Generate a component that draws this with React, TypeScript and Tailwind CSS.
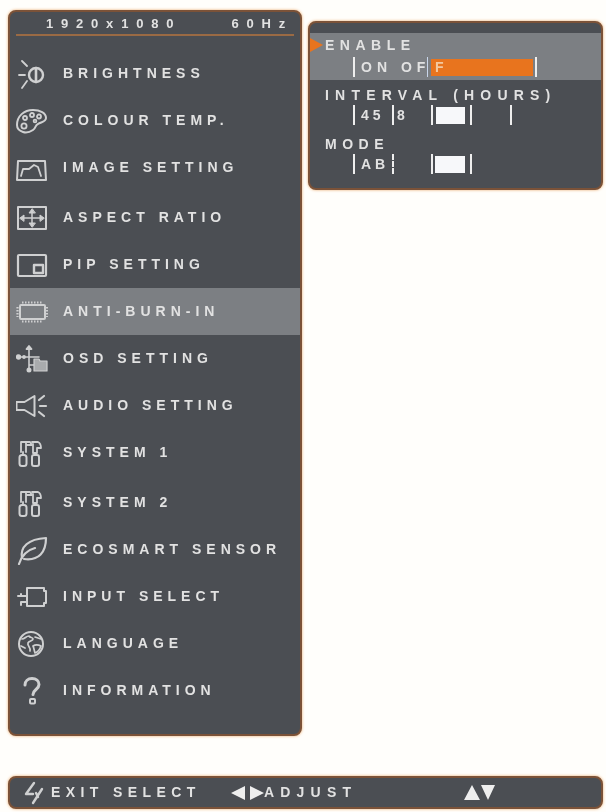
import type { ReactNode } from "react";

function Icon({ children, className = "" }: { children: ReactNode; className?: string }) {
    return (
        <svg
            viewBox="0 0 32 30"
            className={`w-[32px] h-[30px] shrink-0 ${className}`}
            fill="none"
            stroke="#cfd0d1"
            strokeWidth="1.8"
            strokeLinecap="round"
            strokeLinejoin="round"
        >
            {children}
        </svg>
    );
}

const icons = {
    brightness: (
        <Icon>
            <circle cx="20" cy="16" r="7" strokeWidth="2.4" />
            <path d="M20 9v14" strokeWidth="2.6" />
            <path d="M6 2l5 5M3 16h6M6 29l5-7" />
        </Icon>
    ),
    colour: (
        <Icon>
            <path d="M1 19C1 10 8 4 17 4c7 0 13 3 13 8 0 4-5 4-8 6-3 1-2 4-5 6-3 2-7 3-10 2-3-1-6-3-6-7z" strokeWidth="2" />
            <circle cx="8" cy="20" r="2.600" />
            <circle cx="9" cy="12" r="2" />
            <circle cx="16" cy="9" r="2" />
            <circle cx="23" cy="10.500" r="2" />
            <circle cx="19" cy="15" r="1.400" />
        </Icon>
    ),
    image: (
        <Icon>
            <path d="M2 8h27l1 19H1z" strokeWidth="2" />
            <path d="M5 23l2-7h6l5-4 4 2 3 9" />
        </Icon>
    ),
    aspect: (
        <Icon>
            <rect x="2" y="4" width="28" height="22" strokeWidth="2" />
            <path d="M5 15h22M16 7v16" strokeWidth="1.500" />
            <path d="M4 15l4-3v6zM28 15l-4-3v6zM16 6l-3 4h6zM16 24l-3-4h6z" fill="#cfd0d1" strokeWidth="1" />
        </Icon>
    ),
    pip: (
        <Icon>
            <rect x="2" y="5" width="28" height="21" rx="1" strokeWidth="2.200" />
            <rect x="18" y="15" width="9" height="8" strokeWidth="2.400" />
        </Icon>
    ),
    burn: (
        <Icon>
            <rect x="4" y="8" width="25" height="14" rx="1" strokeWidth="2" />
            <path d="M6 5.500h21M6 24.500h21" strokeDasharray="1.500 1.500" strokeLinecap="butt" strokeWidth="2.200" />
            <path d="M1.500 10v10M31 10v10" strokeDasharray="1.500 1.500" strokeLinecap="butt" strokeWidth="2.200" />
        </Icon>
    ),
    osd: (
        <Icon>
            <path d="M2 13h21M13 4v22M13 21h5" strokeWidth="1.600" />
            <path d="M13 2l-2.500 3h5z" fill="#cfd0d1" />
            <circle cx="2.500" cy="13" r="1.800" fill="#cfd0d1" />
            <circle cx="8" cy="13" r="1" fill="#cfd0d1" />
            <path d="M18 15h5l1 2h7v10H18z" fill="#a9abad" strokeWidth="1.200" />
            <circle cx="13" cy="26" r="1.600" fill="#cfd0d1" />
        </Icon>
    ),
    audio: (
        <Icon>
            <path d="M0.500 11h8l10-6v20l-10-6h-8z" strokeWidth="2" />
            <path d="M23 9l5-4M24 15h6M23 21l5 4" strokeWidth="2.200" />
        </Icon>
    ),
    system: (
        <Icon>
            <path d="M5 4h5v10M5 4v10M10 4h4l2 3h-6" strokeWidth="1.800" />
            <rect x="3.500" y="17" width="7" height="11" rx="2.500" strokeWidth="2" />
            <path d="M7 14v3" />
            <path d="M16 4h6c2 1 3 3 3 6h-4v5h-4V6" strokeWidth="1.800" />
            <rect x="16" y="17" width="7" height="11" rx="2" strokeWidth="2" />
        </Icon>
    ),
    eco: (
        <Icon>
            <path d="M6 23C4 12 12 4 30 3c0 14-7 23-22 21" strokeWidth="2.200" />
            <path d="M3 29c3-9 8-14 16-16" strokeWidth="2.200" />
        </Icon>
    ),
    input: (
        <Icon>
            <path d="M11 6h17v3h2v12h-2v3H11z" strokeWidth="2" />
            <path d="M2 14h9v6H5v3M5 14v-2" strokeWidth="2" />
        </Icon>
    ),
    language: (
        <Icon>
            <circle cx="15" cy="15" r="12" strokeWidth="2" />
            <path d="M6 10c3 0 4-3 7-3 1 2 4 1 4 3s-4 2-5 4c-1 3 3 4 2 8M19 8l6 2M17 17c3-2 6-1 8 0-1 3-3 6-6 7-1-3-1-5-2-7zM5 17l4 2" strokeWidth="1.700" />
        </Icon>
    ),
    info: (
        <Icon>
            <path d="M9 9c0-4 3-6.500 7-6.500s7 2.500 7 6c0 5-6 5-6 10" strokeWidth="3" />
            <rect x="14" y="23" width="5" height="4.500" rx="1" strokeWidth="2" />
        </Icon>
    ),
};

const rows: { label: string; icon: ReactNode; active?: boolean; gap?: boolean }[] = [
    { label: "BRIGHTNESS", icon: icons.brightness },
    { label: "COLOUR TEMP.", icon: icons.colour },
    { label: "IMAGE SETTING", icon: icons.image },
    { label: "ASPECT RATIO", icon: icons.aspect, gap: true },
    { label: "PIP SETTING", icon: icons.pip },
    { label: "ANTI-BURN-IN", icon: icons.burn, active: true },
    { label: "OSD SETTING", icon: icons.osd },
    { label: "AUDIO SETTING", icon: icons.audio },
    { label: "SYSTEM 1", icon: icons.system },
    { label: "SYSTEM 2", icon: icons.system, gap: true },
    { label: "ECOSMART SENSOR", icon: icons.eco },
    { label: "INPUT SELECT", icon: icons.input },
    { label: "LANGUAGE", icon: icons.language },
    { label: "INFORMATION", icon: icons.info },
];

const panel = "rounded-[8px] border-2 border-[#7b5238] bg-[#4b4e53] shadow-[0_0_3px_#e9a86a]";

function Cell({ width, children, dashed }: { width: string; children?: ReactNode; dashed?: boolean }) {
    return (
        <div className={`h-[20px] flex items-center whitespace-nowrap border-l-2 border-[#eeeeee] ${dashed ? "border-dashed" : ""} ${width}`}>
            {children}
        </div>
    );
}

export default function App() {
    return (
        <div className="w-[606px] h-[812px] overflow-hidden bg-[#fffefb] pt-[10px] pl-[8px] font-['Liberation_Sans',Arial,sans-serif] font-bold text-[14px] leading-none text-[#e2e2e2] blur-[0.6px]">
            <div className="flex items-start gap-[6px]">
                {/* Main menu */}
                <div className={`w-[294px] h-[726px] ${panel}`}>
                    <div className="mx-[6px] h-[24px] flex items-center justify-between border-b-2 border-[#9a6a44] pl-[30px] pr-[1px] tracking-[7.800px] text-[13px]">
                        <span>1920x1080</span>
                        <span>60Hz</span>
                    </div>
                    <div className="mt-[14px]">
                        {rows.map((row) => (
                            <div
                                key={row.label}
                                className={`h-[47px] flex items-center gap-[15px] pl-[6px] tracking-[5px] ${row.gap ? "mt-[3px]" : ""} ${row.active ? "bg-[#7c7f83]" : ""}`}
                            >
                                {row.icon}
                                <span className="mb-[2px]">{row.label}</span>
                            </div>
                        ))}
                    </div>
                </div>

                {/* Anti-burn-in submenu */}
                <div className={`mt-[11px] w-[295px] h-[169px] pt-[10px] ${panel}`}>
                    <div className="relative h-[47px] bg-[#7c7f83] pl-[15px] pt-[5px]">
                        <div className="absolute left-0 top-[5px] w-0 h-0 border-y-[7px] border-y-transparent border-l-[13px] border-l-[#e8741e]" />
                        <div className="tracking-[5.500px]">ENABLE</div>
                        <div className="mt-[5px] ml-[28px] flex tracking-[5px]">
                            <Cell width="w-[74px]"><span className="pl-[6px]">ON OF</span></Cell>
                            <div className="h-[20px] w-[108px] flex items-center border-l border-[#c9d6ea]">
                                <div className="ml-[3px] w-[102px] h-[17px] flex items-center bg-[#e8741e] pl-[4px] text-[#f3c9a0]">F</div>
                            </div>
                            <Cell width="w-[2px]" />
                        </div>
                    </div>
                    <div className="pl-[15px] pt-[8px]">
                        <div className="tracking-[6.200px]">INTERVAL (HOURS)</div>
                        <div className="mt-[3px] ml-[28px] flex tracking-[4px]">
                            <Cell width="w-[39px]"><span className="pl-[6px]">45</span></Cell>
                            <Cell width="w-[39px]"><span className="pl-[3px]">8</span></Cell>
                            <Cell width="w-[39px]"><div className="ml-[3px] w-[29px] h-[17px] bg-[#f7f8fa]" /></Cell>
                            <Cell width="w-[40px]" />
                            <Cell width="w-[2px]" />
                        </div>
                    </div>
                    <div className="pl-[15px] pt-[12px]">
                        <div className="tracking-[5.500px]">MODE</div>
                        <div className="mt-[3px] ml-[28px] flex tracking-[4px]">
                            <Cell width="w-[39px]"><span className="pl-[6px]">AB</span></Cell>
                            <Cell width="w-[39px]" dashed />
                            <Cell width="w-[39px]"><div className="ml-[2px] w-[30px] h-[17px] bg-[#f7f8fa]" /></Cell>
                            <Cell width="w-[2px]" />
                        </div>
                    </div>
                </div>
            </div>

            {/* Key hints */}
            <div className={`mt-[40px] w-[595px] h-[33px] flex items-center pl-[13px] ${panel}`}>
                <svg viewBox="0 0 22 24" className="w-[22px] h-[24px] shrink-0" fill="none" stroke="#cfd0d1" strokeWidth="2.400" strokeLinecap="round" strokeLinejoin="round">
                    <path d="M11 2L3 13h7M19 8l-9 14M13 12l2 4" />
                </svg>
                <span className="ml-[6px] w-[180px] mb-[2px] tracking-[5.400px]">EXIT SELECT</span>
                <span className="w-0 h-0 border-y-[7px] border-y-transparent border-r-[14px] border-r-[#eeeeee]" />
                <span className="ml-[5px] w-0 h-0 border-y-[7px] border-y-transparent border-l-[14px] border-l-[#eeeeee]" />
                <span className="w-[200px] mb-[2px] tracking-[6.200px]">ADJUST</span>
                <span className="w-0 h-0 border-x-[8px] border-x-transparent border-b-[15px] border-b-[#eeeeee]" />
                <span className="ml-[1px] w-0 h-0 border-x-[7px] border-x-transparent border-t-[15px] border-t-[#eeeeee]" />
            </div>
        </div>
    );
}
